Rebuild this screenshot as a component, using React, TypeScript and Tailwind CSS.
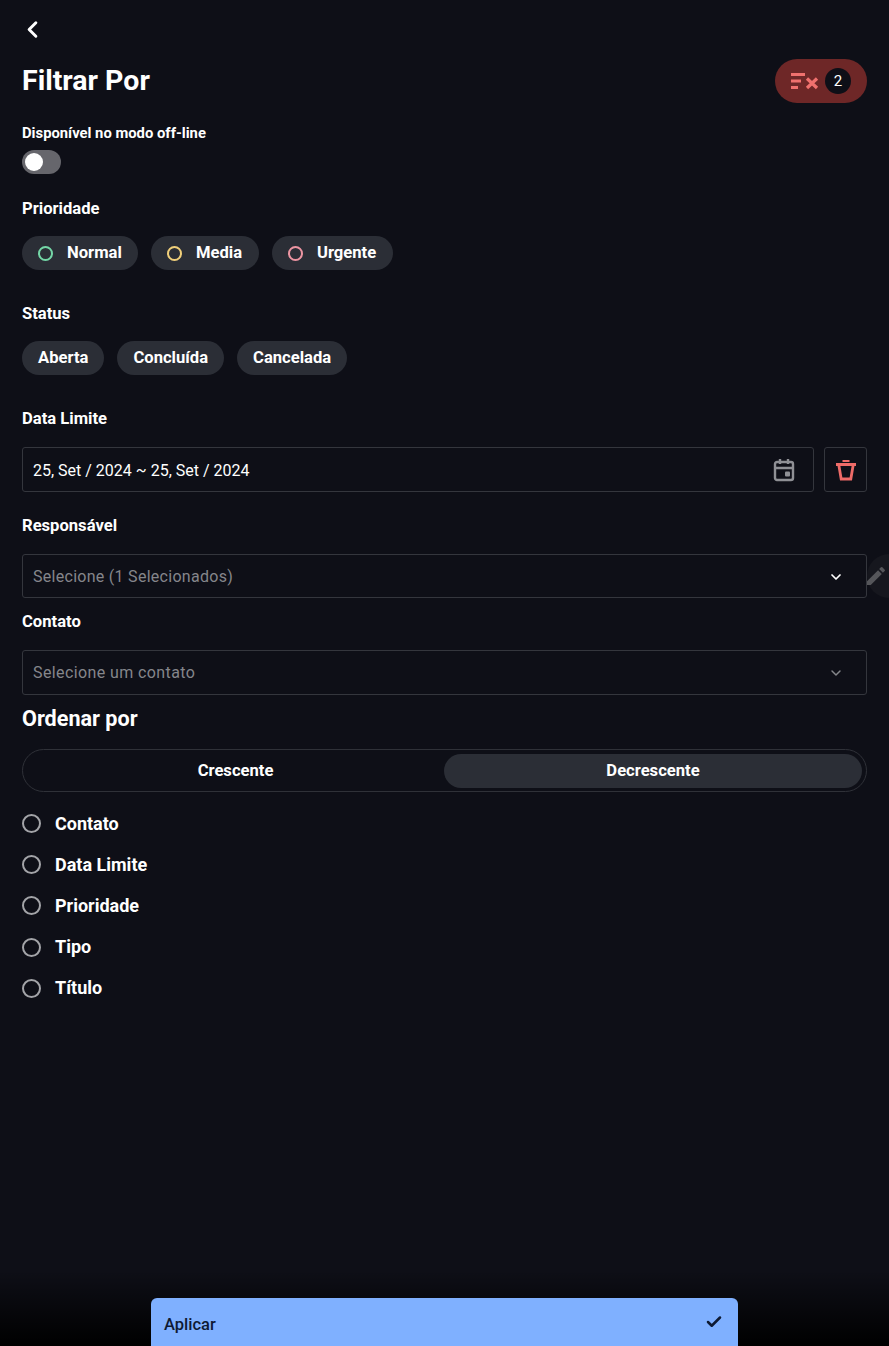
import React from 'react';
import { ChevronDown, ChevronLeft, Check } from 'lucide-react';

const priorities = [
  { name: 'Normal', ring: 'border-[#74d6a6]', cls: 'w-[116px]' },
  { name: 'Media', ring: 'border-[#f0cf7a]', cls: 'w-[108px]' },
  { name: 'Urgente', ring: 'border-[#ec95a2]', cls: 'w-[121px]' },
];

const statuses = ['Aberta', 'Concluída', 'Cancelada'];
const orderFields = ['Contato', 'Data Limite', 'Prioridade', 'Tipo', 'Título'];

function Label({ children, className = '' }: { children: React.ReactNode; className?: string }) {
  return <div className={`text-[16.6px] font-bold leading-[20px] text-white ${className}`}>{children}</div>;
}

function FilterClearIcon() {
  return (
    <svg width="28" height="18" viewBox="0 0 28 18" fill="none" stroke="#f0716e" strokeWidth="3">
      <path d="M0 2.5h14M0 9h10M0 15.5h7" />
      <path d="M16 6.5l10 9.5M26 6.5l-10 9.5" strokeWidth="3.2" />
    </svg>
  );
}

function CalendarIcon() {
  return (
    <svg width="22" height="24" viewBox="0 0 22 24" fill="none" stroke="#8f9095" strokeWidth="2.4">
      <rect x="2" y="4" width="18" height="18" rx="2" />
      <path d="M2 10h18M7 1v5M15 1v5" />
      <rect x="12" y="13.5" width="5" height="5" rx="1" fill="#8f9095" stroke="none" />
    </svg>
  );
}

function TrashIcon() {
  return (
    <svg width="20" height="22" viewBox="0 0 20 22" fill="none" stroke="#ee6b68" strokeWidth="2.8">
      <path d="M0 5.5h20" strokeWidth="3" />
      <path d="M6.5 2h7" strokeWidth="2" />
      <path d="M2.8 6l2.4 14h9.6l2.4-14" />
    </svg>
  );
}

function PencilIcon() {
  return (
    <svg width="24" height="24" viewBox="0 0 24 24" fill="#55565a">
      <path d="M3 17.25V21h3.75L17.81 9.94l-3.75-3.75L3 17.25zM20.71 7.04a1 1 0 0 0 0-1.41l-2.34-2.34a1 1 0 0 0-1.41 0l-1.83 1.83 3.75 3.75 1.83-1.83z" />
    </svg>
  );
}

export default function App() {
  return (
    <div className="relative flex h-[1346px] w-[889px] flex-col overflow-hidden bg-[#0e0f17] font-['Roboto',sans-serif] text-white">
      <div className="px-[22px]">
        <div className="flex h-[59px] items-center">
          <ChevronLeft className="ml-[-3px] h-[27px] w-[27px]" strokeWidth={2.6} />
        </div>

        <div className="flex h-[44px] items-center justify-between">
          <h1 className="text-[28.5px] font-bold leading-none">Filtrar Por</h1>
          <div className="flex h-[44px] w-[92px] items-center gap-[6px] rounded-full bg-[#6e2727] pl-[16px]">
            <FilterClearIcon />
            <span className="flex h-[26px] w-[26px] items-center justify-center rounded-full bg-[#0e0f17] text-[15px] leading-none">2</span>
          </div>
        </div>

        <div className="mt-[20px] text-[14.8px] font-bold leading-[20px]">Disponível no modo off-line</div>
        <div className="mt-[7px] flex h-[24px] w-[39px] items-center rounded-full bg-[#66666c] pl-[3px]">
          <span className="h-[18px] w-[18px] rounded-full bg-white" />
        </div>

        <Label className="mt-[25px]">Prioridade</Label>
        <div className="mt-[17px] flex gap-[13px]">
          {priorities.map((p) => (
            <div key={p.name} className={`flex h-[34px] items-center rounded-full bg-[#2b2e36] pl-[16px] ${p.cls}`}>
              <span className={`h-[15px] w-[15px] rounded-full border-2 ${p.ring}`} />
              <span className="ml-[14px] text-[16.6px] font-bold">{p.name}</span>
            </div>
          ))}
        </div>

        <Label className="mt-[34px]">Status</Label>
        <div className="mt-[17px] flex gap-[13px]">
          {statuses.map((s) => (
            <div key={s} className="flex h-[34px] items-center rounded-full bg-[#2b2e36] px-[16px] text-[16.6px] font-bold">
              {s}
            </div>
          ))}
        </div>

        <Label className="mt-[34px]">Data Limite</Label>
        <div className="mt-[18px] flex gap-[10px]">
          <div className="flex h-[45px] flex-1 items-center justify-between rounded-[3px] border border-[#34363d] pl-[10px] pr-[18px] text-base">
            <span className="pt-[2px]">25, Set / 2024 ~ 25, Set / 2024</span>
            <CalendarIcon />
          </div>
          <div className="flex h-[45px] w-[43px] items-center justify-center rounded-[3px] border border-[#34363d]">
            <TrashIcon />
          </div>
        </div>

        <Label className="mt-[24px]">Responsável</Label>
        <div className="relative mt-[18px] flex h-[44px] items-center justify-between rounded-[3px] border border-[#34363d] pl-[10px] pr-[22px] pt-[1px] text-base text-[#85868b]">
          <span className="tracking-[0.28px]">Selecione (1 Selecionados)</span>
          <ChevronDown className="h-[16px] w-[16px] text-white" strokeWidth={2.6} />
          <div className="absolute left-[844px] top-[-1px] h-[44px] w-[44px] rounded-full bg-[#16171e]">
            <div className="ml-[-3px] mt-[10px]">
              <PencilIcon />
            </div>
          </div>
        </div>

        <Label className="mt-[14px]">Contato</Label>
        <div className="mt-[18px] flex h-[45px] items-center justify-between rounded-[3px] border border-[#34363d] pl-[10px] pr-[22px] text-base text-[#85868b]">
          <span className="pt-[1px] tracking-[0.4px]">Selecione um contato</span>
          <ChevronDown className="h-[16px] w-[16px] text-[#85868b]" strokeWidth={2.2} />
        </div>

        <div className="mt-[12px] text-[21.6px] font-bold leading-[24px]">Ordenar por</div>
        <div className="mt-[18px] flex h-[43px] items-center rounded-full border border-[#2f3138] p-[4px]">
          <div className="flex h-[34px] flex-1 items-center justify-center pt-[1px] text-[16.6px] font-bold">Crescente</div>
          <div className="flex h-[34px] w-[418px] items-center justify-center rounded-full bg-[#2b2e36] pt-[1px] text-[16.6px] font-bold">Decrescente</div>
        </div>

        <div className="mt-[11px] flex flex-col">
          {orderFields.map((f) => (
            <div key={f} className="flex h-[41.2px] items-center gap-[14px]">
              <span className="h-[19px] w-[19px] rounded-full border-2 border-[#a3a4a8]" />
              <span className="text-lg font-bold">{f}</span>
            </div>
          ))}
        </div>
      </div>

      <div className="absolute inset-x-0 bottom-0 flex h-[76px] justify-center bg-gradient-to-b from-transparent to-black">
        <div className="mt-[28px] flex h-[60px] w-[587px] items-start justify-between rounded-[6px] bg-[#7fb0ff] px-[13px] pt-[15px] text-[16.5px] font-medium text-[#0e1a33]">
          <span>Aplicar</span>
          <Check className="mr-[2px] h-[18px] w-[18px]" strokeWidth={3.4} />
        </div>
      </div>
    </div>
  );
}
